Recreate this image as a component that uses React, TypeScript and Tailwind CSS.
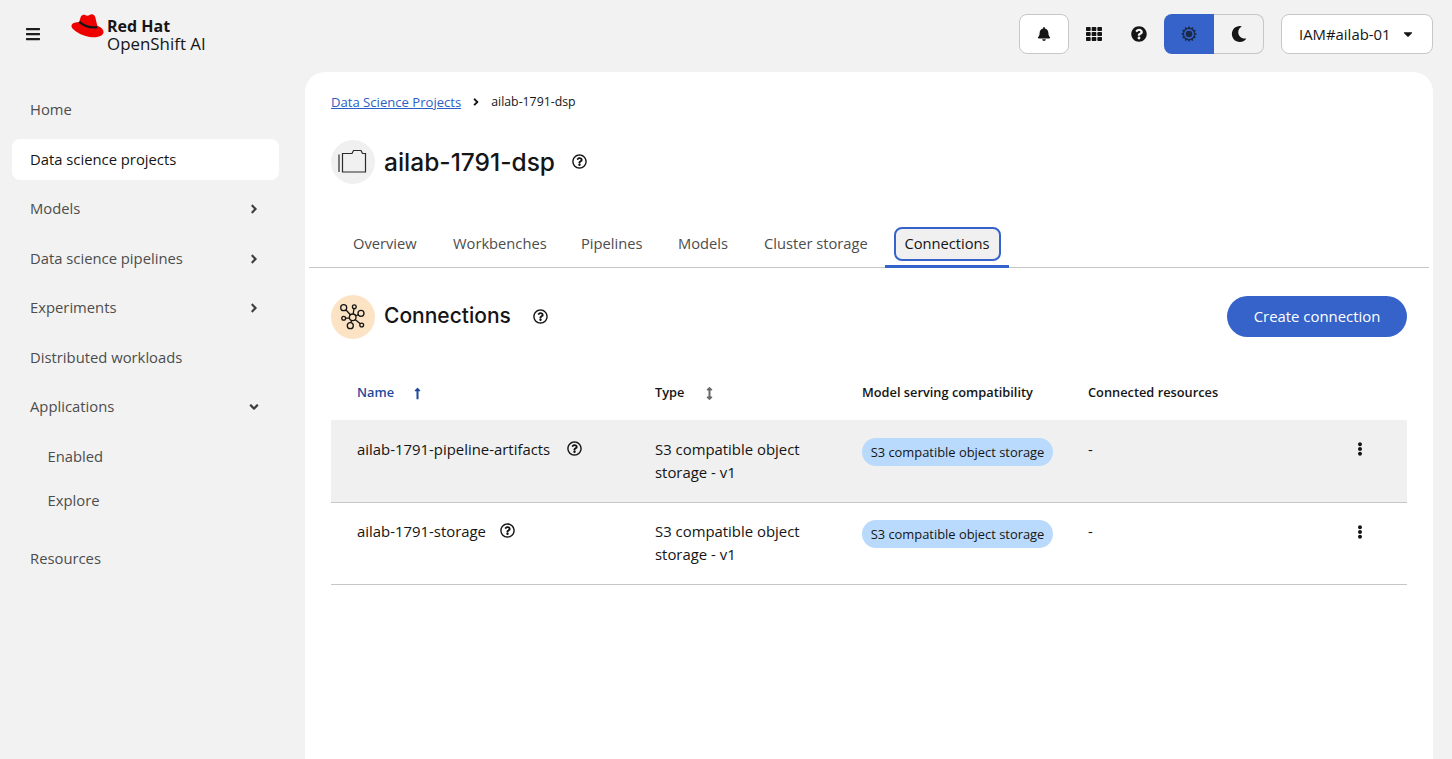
import React from 'react'
import { FaBell, FaTh, FaQuestionCircle, FaRegQuestionCircle, FaMoon, FaBars, FaCaretDown, FaAngleRight, FaAngleDown, FaLongArrowAltUp, FaArrowsAltV, FaEllipsisV } from 'react-icons/fa'

const textFont = "font-['Open_Sans',sans-serif]"
const headFont = "font-['Inter',sans-serif]"

function Logo() {
  return (
    <svg width="33" height="24" viewBox="0 0 33 24" className="shrink-0">
      <path d="M9.500 3.500C10.500.8 12.500.2 14.500 1.200c1.500.7 2.800.6 4-.2 2.500-1.500 5-.6 5.800 2.200l2 8.600c3.700 1.400 6.500 3.800 6.200 6.700-.5 3.500-6 5.200-12 4.700C12.500 22.500 4.500 18 1.500 14.500-.5 12 .5 9.800 3.500 8.800c1.500-.5 3.200-.8 4.700-.9z" fill="#ee0000" />
      <path d="M8.300 7.800c3 3.200 10 6.500 17.900 5.300" fill="none" stroke="#151515" strokeWidth="2.300" />
    </svg>
  )
}

function SunIcon() {
  return (
    <svg width="16" height="16" viewBox="0 0 16 16" fill="#1c2a4a">
      <path d="M8 0l1.500 2.300L12 1.100l.3 2.600 2.600.3-1.200 2.500L16 8l-2.300 1.500 1.200 2.500-2.600.3-.3 2.600-2.500-1.200L8 16l-1.500-2.300L4 14.900l-.3-2.600-2.600-.3 1.200-2.500L0 8l2.300-1.500L1.100 4l2.600-.3L4 1.100l2.500 1.200z" />
      <circle cx="8" cy="8" r="4.900" fill="#3563c9" />
      <circle cx="8" cy="8" r="3.300" fill="#1c2a4a" />
    </svg>
  )
}

function FolderIcon() {
  return (
    <svg width="44" height="44" viewBox="0 0 44 44" fill="none" stroke="#2a2a2a" strokeWidth="1.200">
      <path d="M11.500 32V13.500H21l1.500-3H30l1.500 3h3V32z" />
      <path d="M8 14.500V32" />
    </svg>
  )
}

function ConnectionsIcon() {
  return (
    <svg width="44" height="44" viewBox="0 0 44 44" fill="none" stroke="#151515" strokeWidth="1.300">
      <circle cx="21.700" cy="22.300" r="3.300" />
      <circle cx="12.700" cy="12.700" r="3" />
      <circle cx="23.300" cy="11.700" r="1.900" />
      <circle cx="30" cy="18.300" r="3" />
      <circle cx="12.700" cy="23.300" r="1.900" />
      <circle cx="19.300" cy="30.700" r="3" />
      <circle cx="30.700" cy="30" r="1.900" />
      <path d="M14.800 14.800l4.600 5M23 13.600l-.8 5.400M27.200 19.500l-2.400 1.500M14.600 23.100h3.800M19.800 27.800l.8-2.400M29.300 28.700l-5.200-4.300" />
    </svg>
  )
}

function NavItem({ label, active, arrow, sub }: { label: string; active?: boolean; arrow?: 'right' | 'down'; sub?: boolean }) {
  return (
    <div className={`flex h-[41px] items-center justify-between rounded-lg pr-[18px] text-[14.8px] ${sub ? 'pl-[35.500px]' : 'pl-[18px]'} ${active ? 'bg-white text-[#151515]' : 'text-[#4d4d4d]'}`}>
      <span>{label}</span>
      {arrow === 'right' && <FaAngleRight className="text-[14px] text-[#3d3d3d]" />}
      {arrow === 'down' && <FaAngleDown className="text-[14px] text-[#3d3d3d]" />}
    </div>
  )
}

function Sidebar() {
  return (
    <nav className="flex w-[305px] shrink-0 flex-col pl-[12px] pr-[26px] pt-[17px]">
      <NavItem label="Home" />
      <div className="mt-[9px]"><NavItem label="Data science projects" active /></div>
      <div className="mt-[8px]"><NavItem label="Models" arrow="right" /></div>
      <div className="mt-[9px]"><NavItem label="Data science pipelines" arrow="right" /></div>
      <div className="mt-[8px]"><NavItem label="Experiments" arrow="right" /></div>
      <div className="mt-[9px]"><NavItem label="Distributed workloads" /></div>
      <div className="mt-[8px]"><NavItem label="Applications" arrow="down" /></div>
      <div className="mt-[9px]"><NavItem label="Enabled" sub /></div>
      <div className="mt-[3px]"><NavItem label="Explore" sub /></div>
      <div className="mt-[17px]"><NavItem label="Resources" /></div>
    </nav>
  )
}

function Header() {
  return (
    <header className="flex h-[72px] items-start pl-[25px] pr-[19px] pt-[14px]">
      <FaBars className="mt-[12px] text-[16px] text-[#1f1f1f]" />
      <div className="ml-[30px] flex items-start">
        <Logo />
        <div className="ml-[3px] mt-[4px] whitespace-nowrap text-[16.900px] leading-[17px] text-[#151515]">
          <div className="text-[16px] font-bold">Red Hat</div>
          <div>OpenShift AI</div>
        </div>
      </div>
      <div className="ml-auto flex items-center">
        <div className="flex h-[40px] w-[50px] items-center justify-center rounded-lg border border-[#c7c7c7] bg-white"><FaBell className="text-[14px] text-[#151515]" /></div>
        <div className="flex h-[40px] w-[50px] items-center justify-center"><FaTh className="text-[16px] text-[#151515]" /></div>
        <div className="flex h-[40px] w-[40px] items-center justify-center"><FaQuestionCircle className="text-[16px] text-[#151515]" /></div>
        <div className="ml-[5px] flex h-[40px] w-[50px] items-center justify-center rounded-l-lg bg-[#3563c9]"><SunIcon /></div>
        <div className="flex h-[40px] w-[50px] items-center justify-center rounded-r-lg border border-l-0 border-[#c7c7c7]"><FaMoon className="text-[16px] text-[#151515]" /></div>
        <div className="ml-[17px] flex h-[40px] w-[152px] items-center justify-between rounded-lg border border-[#c7c7c7] bg-white pl-[17px] pr-[17px] text-[14.900px] text-[#151515]">
          <span>IAM#ailab-01</span>
          <FaCaretDown className="text-[14px]" />
        </div>
      </div>
    </header>
  )
}

function Tabs() {
  return (
    <div className="ml-[4px] mr-[4px] flex h-[41px] items-end border-b border-[#c7c7c7] pl-[44px] text-[14.700px] text-[#4d4d4d]">
      <div className="h-[41px] w-[100px] pt-[6px]">Overview</div>
      <div className="h-[41px] w-[128px] pt-[6px]">Workbenches</div>
      <div className="h-[41px] w-[97px] pt-[6px]">Pipelines</div>
      <div className="h-[41px] w-[86px] pt-[6px]">Models</div>
      <div className="h-[41px] w-[121px] pt-[6px]">Cluster storage</div>
      <div className="relative -mb-px flex h-[41px] w-[124px] justify-center border-b-[3px] border-[#3563c9]">
        <div className="flex h-[34px] w-[107px] items-center justify-center rounded-lg border-2 border-[#3563c9] bg-[#f0f0f0] pb-[2px] text-[#151515]">Connections</div>
      </div>
    </div>
  )
}

function Row({ name, last }: { name: string; last?: boolean }) {
  return (
    <div className={`flex border-b border-[#c7c7c7] text-[14.900px] leading-[23px] text-[#151515] ${last ? 'h-[82px] pt-[17px]' : 'h-[83px] bg-[#f0f0f0] pt-[18px]'}`}>
      <div className="flex w-[324px] items-start pl-[26px]">
        <span>{name}</span>
        <FaRegQuestionCircle className={`mt-[3px] text-[15px] ${last ? 'ml-[14px]' : 'ml-[17px]'}`} />
      </div>
      <div className="w-[207px]">S3 compatible object<br />storage - v1</div>
      <div className="w-[226px]">
        <span className="inline-flex h-[28px] w-[191px] items-center justify-center rounded-full bg-[#b9dafc] text-[12.900px] text-[#151515]">S3 compatible object storage</span>
      </div>
      <div className="flex-1">-</div>
      <div className={`flex w-[95px] justify-center ${last ? 'pt-[5px]' : 'pt-[4px]'}`}><FaEllipsisV className="text-[14px]" /></div>
    </div>
  )
}

export default function App() {
  return (
    <div className={`h-[759px] w-[1452px] overflow-hidden bg-[#f2f2f2] ${textFont}`}>
      <Header />
      <div className="flex">
        <Sidebar />
        <main className="h-[687px] w-[1128px] rounded-t-[20px] bg-white">
          <div className="px-[26px] pt-[21px] leading-[18px]">
            <div className="flex items-center">
              <a className="text-[13.100px] text-[#2b5fc4] underline">Data Science Projects</a>
              <FaAngleRight className="ml-[9px] text-[12px] text-[#151515]" />
              <span className="ml-[9px] text-[12.300px] text-[#151515]">ailab-1791-dsp</span>
            </div>
          </div>
          <div className="mt-[29px] flex items-center px-[26px]">
            <div className="flex h-[44px] w-[44px] items-center justify-center rounded-full bg-[#f0f0f0]"><FolderIcon /></div>
            <h1 className={`ml-[9px] text-[24.500px] font-medium text-[#151515] ${headFont}`}>ailab-1791-dsp</h1>
            <FaRegQuestionCircle className="mb-[2px] ml-[17px] text-[15px] text-[#151515]" />
          </div>
          <div className="mt-[43px]"><Tabs /></div>
          <div className="mt-[27px] flex items-center px-[26px]">
            <div className="flex h-[44px] w-[44px] items-center justify-center rounded-full bg-[#fbe3c4]"><ConnectionsIcon /></div>
            <h2 className={`mb-[2px] ml-[9px] text-[21px] font-medium text-[#151515] ${headFont}`}>Connections</h2>
            <FaRegQuestionCircle className="mb-[2px] ml-[22px] text-[15px] text-[#151515]" />
            <div className="mb-[2px] ml-auto flex h-[41px] w-[180px] items-center justify-center rounded-full bg-[#3563c9] text-[14.900px] font-medium text-white">Create connection</div>
          </div>
          <div className="mx-[26px] mt-[25px]">
            <div className="flex h-[56px] items-center pt-[2px] text-[12.800px] font-semibold text-[#151515]">
              <div className="flex w-[324px] items-center pl-[26px] text-[#1f4a9c]">Name<FaLongArrowAltUp className="ml-[17px] text-[13px]" /></div>
              <div className="flex w-[207px] items-center">Type<FaArrowsAltV className="ml-[19px] text-[13px] text-[#6a6a6a]" /></div>
              <div className="w-[226px]">Model serving compatibility</div>
              <div>Connected resources</div>
            </div>
            <Row name="ailab-1791-pipeline-artifacts" />
            <Row name="ailab-1791-storage" last />
          </div>
        </main>
      </div>
    </div>
  )
}
